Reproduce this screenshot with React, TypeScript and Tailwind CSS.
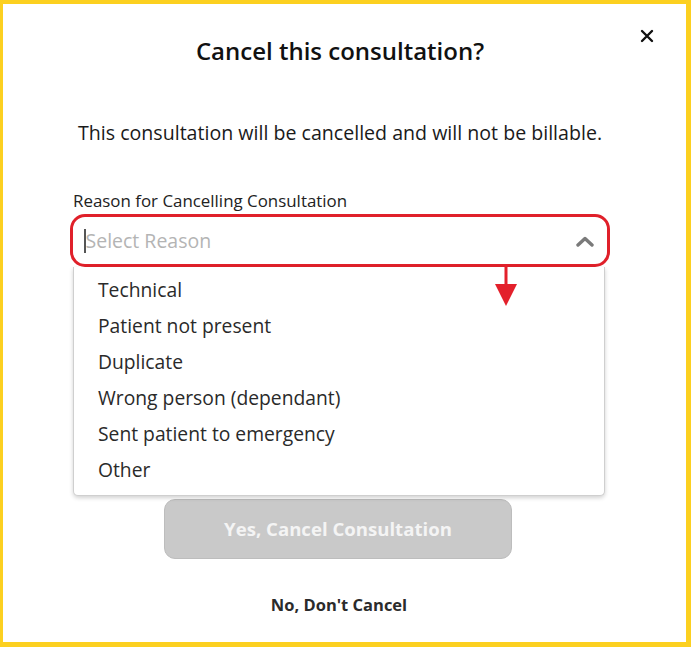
import * as React from "react";

// ─── Options ──────────────────────────────────────────────────────────────────
const REASONS = [
  "Technical",
  "Patient not present",
  "Duplicate",
  "Wrong person (dependant)",
  "Sent patient to emergency",
  "Other",
];

const FONT = { fontFamily: '"Open Sans", "Noto Sans", sans-serif' };

// ─── Chevron up ────────────────────────────────────────────────────────────────
const ChevronUp = () => (
  <svg width="20" height="12" viewBox="0 0 20 12" fill="none">
    <path d="M3 10 L10 3.5 L17 10" stroke="#7a7a7a" strokeWidth="3.4" strokeLinecap="round" strokeLinejoin="round" />
  </svg>
);

// ─── Red annotation arrow ─────────────────────────────────────────────────────
const Arrow = () => (
  <svg width="24" height="42" viewBox="0 0 24 42">
    <rect x="10.5" y="0" width="3" height="22" fill="#e3202b" />
    <polygon points="1,19 23,19 12,41" fill="#e3202b" />
  </svg>
);

export default function App() {
  return (
    <div className="w-[691px] h-[647px] bg-[#fcd020] pt-[4px] pl-[3px] pr-[5px] pb-[5px]" style={FONT}>
      <div className="relative h-full w-full bg-white pl-[67px] pr-[76px]">
        {/* ── Close ── */}
        <button className="absolute right-[29px] top-[22px] flex h-5 w-5 items-center justify-center">
          <svg width="14" height="14" viewBox="0 0 14 14">
            <path d="M2 2 L12 12 M12 2 L2 12" stroke="#111" strokeWidth="2.4" strokeLinecap="round" />
          </svg>
        </button>

        {/* ── Title ── */}
        <h1 className="pt-[32px] text-center text-[24px] leading-[30px] font-semibold text-[#111]">
          Cancel this consultation?
        </h1>

        {/* ── Message ── */}
        <p className="mt-[54px] text-center text-[19.6px] leading-[26px] text-[#1a1a1a]">
          This consultation will be cancelled and will not be billable.
        </p>

        {/* ── Reason select ── */}
        <label className="mt-[44px] block pl-[3px] text-[16.9px] leading-[22px] text-[#222]">
          Reason for Cancelling Consultation
        </label>
        <div className="relative mt-[2px]">
          <div className="flex h-[53px] items-center justify-between rounded-[15px] border-[3px] border-[#e0202a] pl-[11px] pr-[12px]">
            <div className="flex items-center">
              <span className="h-[24px] w-[1.5px] bg-[#555]" />
              <span className="text-[19.5px] text-[#b4b4b4]">Select Reason</span>
            </div>
            <ChevronUp />
          </div>

          {/* ── Open menu ── */}
          <div className="absolute left-[3px] right-[5px] top-[53px] z-10 rounded-b-[5px] border border-t-0 border-[#cfcfcf] bg-white pt-[5px] pb-[7px] shadow-[0_2px_4px_rgba(0,0,0,0.18)]">
            {REASONS.map((r) => (
              <div key={r} className="flex h-[36px] items-center pl-[24px] text-[19.3px] text-[#2a2a2a]">
                {r}
              </div>
            ))}
          </div>

          <div className="absolute left-[424px] top-[51px] z-20">
            <Arrow />
          </div>
        </div>

        {/* ── Actions ── */}
        <div className="mt-[232px] flex flex-col items-center">
          <button className="ml-[-4px] flex h-[60px] w-[348px] items-center justify-center rounded-[11px] border border-[#bdbdbd] bg-[#c9c9c9] text-[18.6px] font-bold text-[#f4f4f4]">
            Yes, Cancel Consultation
          </button>
          <button className="mt-[34px] ml-[-2px] text-[16.5px] font-bold text-[#2b2b2b]">No, Don't Cancel</button>
        </div>
      </div>
    </div>
  );
}
